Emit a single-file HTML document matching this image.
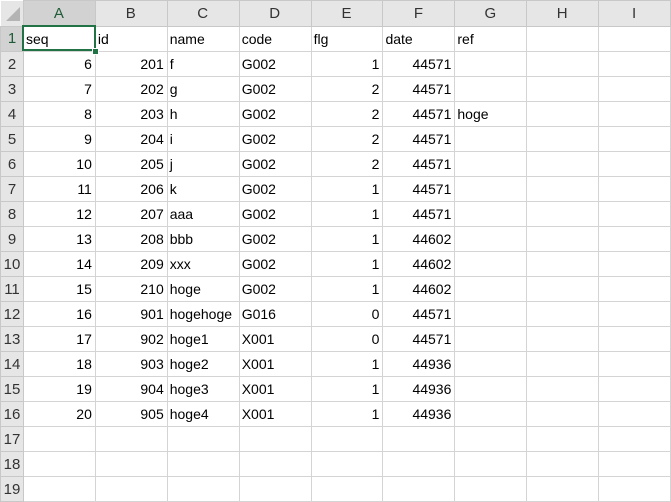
<!DOCTYPE html>
<html><head><meta charset="utf-8"><style>
body{margin:0;width:671px;height:497px;overflow:hidden;background:#fff;font-family:"Liberation Sans","Noto Sans CJK JP",sans-serif;font-size:14px;color:#000;position:relative}
table{border-collapse:collapse;table-layout:fixed;position:absolute;left:0;top:0}
td{border:1px solid #d4d4d4;height:24px;padding:0 3px 0 2px;white-space:nowrap;overflow:hidden;vertical-align:middle}
td.n{text-align:right}
tr.h td{background:#e6e6e6;border-color:#c8c8c8;text-align:center;font-size:15px;color:#333;height:24px}
td.r{background:#e6e6e6;border-color:#c8c8c8;text-align:center;font-size:15px;color:#333;padding:0}
tr.h td.sel{background:#d2d2d2;border-bottom:2px solid #217346;color:#1e5b36}
td.r.sel{background:#d2d2d2;color:#1e5b36}
tr.h td.corner{background:#e6e6e6}
#selbox{position:absolute;left:22px;top:25px;width:70px;height:22px;border:2px solid #217346}
#handle{position:absolute;left:92px;top:48px;width:5px;height:5px;background:#217346;border:1px solid #fff}
#tri{position:absolute;left:6px;top:7px;width:0;height:0;border-left:14px solid transparent;border-bottom:14px solid #b4b4b4}
</style></head><body>
<table>
<colgroup><col style="width:23px"><col style="width:72px"><col style="width:72px"><col style="width:72px"><col style="width:72px"><col style="width:72px"><col style="width:72px"><col style="width:72px"><col style="width:72px"><col style="width:72px"></colgroup>
<tr class="h"><td class="corner" style="border-left:none;border-top:none"></td><td class="sel">A</td><td>B</td><td>C</td><td>D</td><td>E</td><td>F</td><td>G</td><td>H</td><td>I</td></tr>
<tr><td class="r sel">1</td><td>seq</td><td>id</td><td>name</td><td>code</td><td>flg</td><td>date</td><td>ref</td><td></td><td></td></tr>
<tr><td class="r">2</td><td class="n">6</td><td class="n">201</td><td>f</td><td>G002</td><td class="n">1</td><td class="n">44571</td><td></td><td></td><td></td></tr>
<tr><td class="r">3</td><td class="n">7</td><td class="n">202</td><td>g</td><td>G002</td><td class="n">2</td><td class="n">44571</td><td></td><td></td><td></td></tr>
<tr><td class="r">4</td><td class="n">8</td><td class="n">203</td><td>h</td><td>G002</td><td class="n">2</td><td class="n">44571</td><td>hoge</td><td></td><td></td></tr>
<tr><td class="r">5</td><td class="n">9</td><td class="n">204</td><td>i</td><td>G002</td><td class="n">2</td><td class="n">44571</td><td></td><td></td><td></td></tr>
<tr><td class="r">6</td><td class="n">10</td><td class="n">205</td><td>j</td><td>G002</td><td class="n">2</td><td class="n">44571</td><td></td><td></td><td></td></tr>
<tr><td class="r">7</td><td class="n">11</td><td class="n">206</td><td>k</td><td>G002</td><td class="n">1</td><td class="n">44571</td><td></td><td></td><td></td></tr>
<tr><td class="r">8</td><td class="n">12</td><td class="n">207</td><td>aaa</td><td>G002</td><td class="n">1</td><td class="n">44571</td><td></td><td></td><td></td></tr>
<tr><td class="r">9</td><td class="n">13</td><td class="n">208</td><td>bbb</td><td>G002</td><td class="n">1</td><td class="n">44602</td><td></td><td></td><td></td></tr>
<tr><td class="r">10</td><td class="n">14</td><td class="n">209</td><td>xxx</td><td>G002</td><td class="n">1</td><td class="n">44602</td><td></td><td></td><td></td></tr>
<tr><td class="r">11</td><td class="n">15</td><td class="n">210</td><td>hoge</td><td>G002</td><td class="n">1</td><td class="n">44602</td><td></td><td></td><td></td></tr>
<tr><td class="r">12</td><td class="n">16</td><td class="n">901</td><td>hogehoge</td><td>G016</td><td class="n">0</td><td class="n">44571</td><td></td><td></td><td></td></tr>
<tr><td class="r">13</td><td class="n">17</td><td class="n">902</td><td>hoge1</td><td>X001</td><td class="n">0</td><td class="n">44571</td><td></td><td></td><td></td></tr>
<tr><td class="r">14</td><td class="n">18</td><td class="n">903</td><td>hoge2</td><td>X001</td><td class="n">1</td><td class="n">44936</td><td></td><td></td><td></td></tr>
<tr><td class="r">15</td><td class="n">19</td><td class="n">904</td><td>hoge3</td><td>X001</td><td class="n">1</td><td class="n">44936</td><td></td><td></td><td></td></tr>
<tr><td class="r">16</td><td class="n">20</td><td class="n">905</td><td>hoge4</td><td>X001</td><td class="n">1</td><td class="n">44936</td><td></td><td></td><td></td></tr>
<tr><td class="r">17</td><td></td><td></td><td></td><td></td><td></td><td></td><td></td><td></td><td></td></tr>
<tr><td class="r">18</td><td></td><td></td><td></td><td></td><td></td><td></td><td></td><td></td><td></td></tr>
<tr><td class="r">19</td><td></td><td></td><td></td><td></td><td></td><td></td><td></td><td></td><td></td></tr>
</table>
<div id="tri"></div>
<div id="selbox"></div><div id="handle"></div>
</body></html>
